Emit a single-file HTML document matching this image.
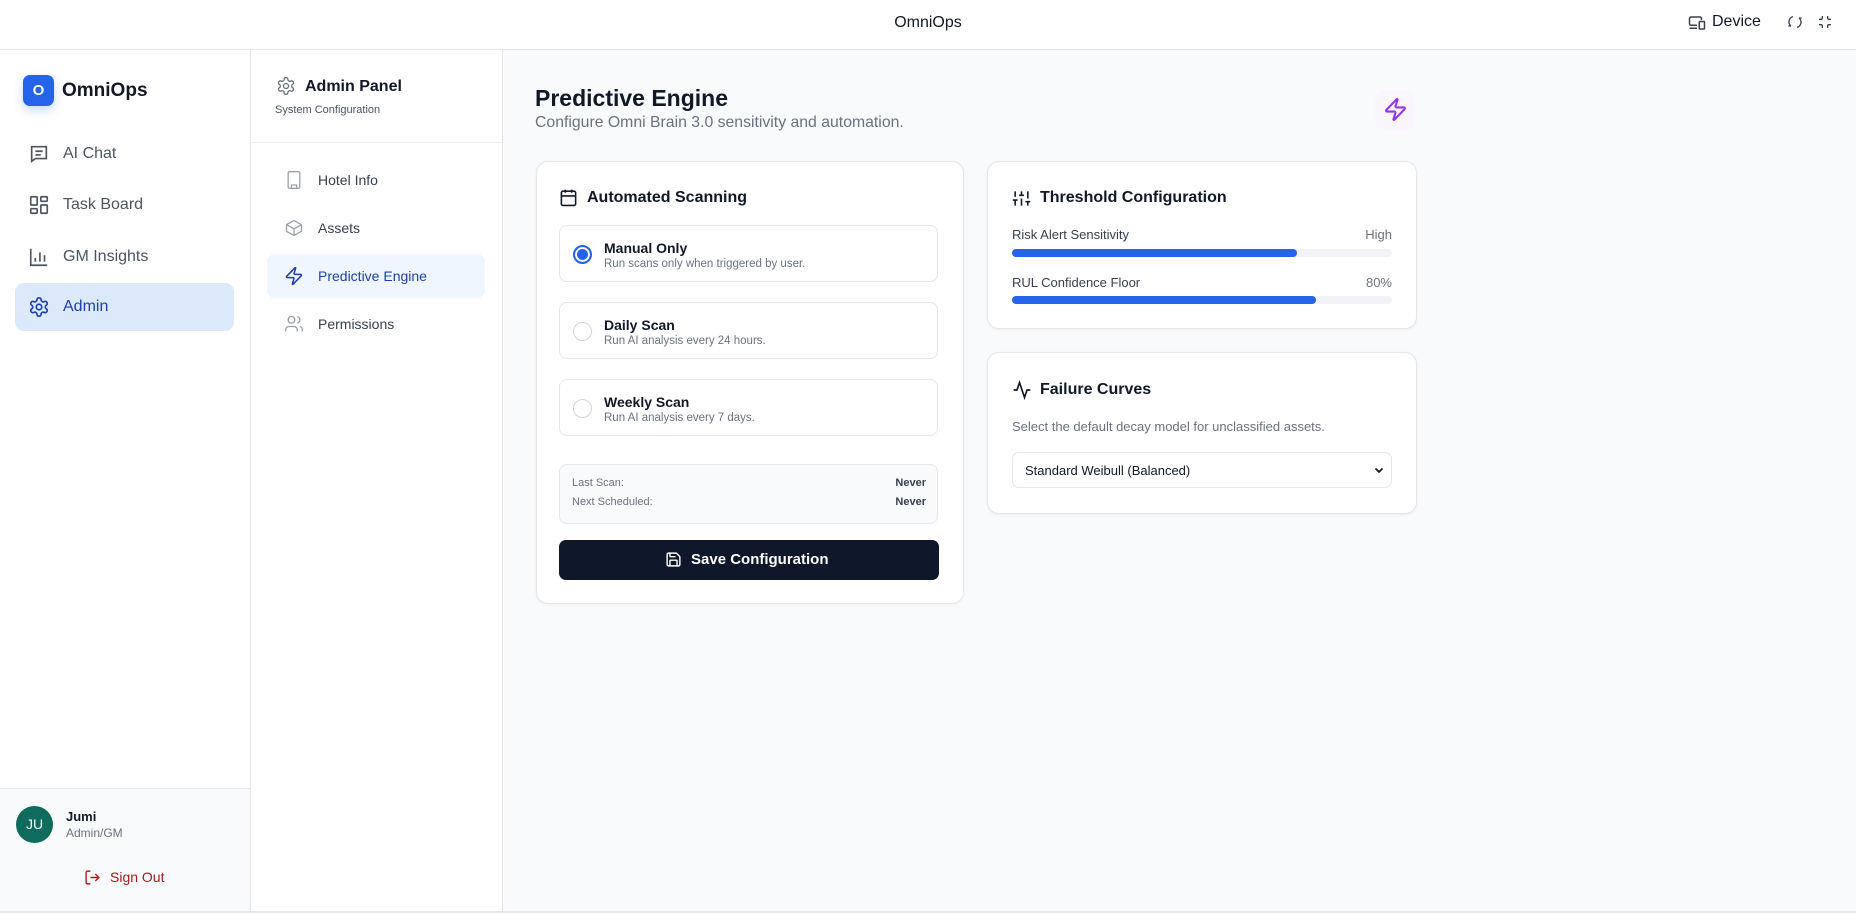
<!DOCTYPE html>
<html><head><meta charset="utf-8"><style>
*{box-sizing:border-box;margin:0;padding:0}
body{width:1856px;height:913px;overflow:hidden;font-family:"Liberation Sans",sans-serif;background:#fff;position:relative;color:#111827}
.abs{position:absolute}
svg{display:block}
.top{left:0;top:0;width:1856px;height:50px;border-bottom:1px solid #e5e7eb;background:#fff}
.side{left:0;top:50px;width:251px;height:861px;border-right:1px solid #e5e7eb;background:#fff}
.sub{left:251px;top:50px;width:252px;height:861px;border-right:1px solid #e5e7eb;background:#fff}
.main{left:503px;top:50px;width:1353px;height:861px;background:#f8fafc}
.nav{position:absolute;left:15px;width:219px;height:48px;border-radius:9px;display:flex;align-items:center;padding-left:13px;font-size:16px;color:#4b5563}
.nav svg{margin-right:13px}
.si{position:absolute;left:267px;width:218px;height:44px;border-radius:8px;display:flex;align-items:center;padding-left:17px;font-size:14px;color:#374151}
.si svg{margin-right:14px}
.card{position:absolute;background:#fff;border:1px solid #e5e7eb;border-radius:12px;box-shadow:0 1px 3px rgba(0,0,0,.05)}
.opt{position:absolute;left:559px;width:379px;height:57px;border:1px solid #e5e7eb;border-radius:8px;background:#fff}
.opt .r{position:absolute;left:13px;top:19px;width:19px;height:19px;border-radius:50%;border:1px solid #d1d5db}
.opt b{position:absolute;left:44px;top:14px;font-size:14px;color:#111827}
.opt span{position:absolute;left:44px;top:32px;font-size:11.5px;color:#6b7280}
.h3{position:absolute;font-size:16px;font-weight:bold;color:#111827}
</style></head><body>
<div class="abs top"></div>
<div class="abs" style="left:0;width:1856px;top:14px;text-align:center;font-size:16px;color:#111827">OmniOps</div>
<svg class="abs" style="left:1688px;top:14px" width="18" height="18" viewBox="0 0 24 24" fill="none" stroke="#374151" stroke-width="2"><path d="M18 8V6a2 2 0 0 0-2-2H4a2 2 0 0 0-2 2v7a2 2 0 0 0 2 2h8M2 19h10"/><rect x="15" y="10" width="7" height="10" rx="1"/></svg>
<div class="abs" style="left:1712px;top:13px;font-size:16px;color:#111827">Device</div>
<svg class="abs" style="left:1787px;top:14px" width="16" height="16" viewBox="0 0 24 24" fill="none" stroke="#374151" stroke-width="2"><path d="M9 4a8 8 0 0 0-3 14M6 18H2M15 20a8 8 0 0 0 3-14M18 6h4"/></svg>
<svg class="abs" style="left:1817px;top:14px" width="16" height="16" viewBox="0 0 24 24" fill="none" stroke="#374151" stroke-width="2"><path d="M8 3v3a2 2 0 0 1-2 2H3M21 8h-3a2 2 0 0 1-2-2V3M3 16h3a2 2 0 0 1 2 2v3M16 21v-3a2 2 0 0 1 2-2h3"/></svg>

<div class="abs side"></div>
<div class="abs" style="left:23px;top:75px;width:31px;height:31px;background:#2563eb;border-radius:7px;color:#fff;font-weight:bold;font-size:15px;text-align:center;line-height:31px;box-shadow:0 4px 10px rgba(37,99,235,.25)">O</div>
<div class="abs" style="left:62px;top:80px;font-size:19px;font-weight:bold;color:#111827">OmniOps</div>
<div class="nav" style="top:130px"><svg width="22" height="22" viewBox="0 0 24 24" fill="none" stroke="#4b5563" stroke-width="1.8"><path d="M4 4h16v13H8l-4 3z"/><path d="M8 9h8M8 13h6"/></svg>AI Chat</div>
<div class="nav" style="top:181px"><svg width="22" height="22" viewBox="0 0 24 24" fill="none" stroke="#4b5563" stroke-width="1.8"><rect x="3" y="3" width="7" height="9" rx="1"/><rect x="14" y="3" width="7" height="5" rx="1"/><rect x="14" y="12" width="7" height="9" rx="1"/><rect x="3" y="16" width="7" height="5" rx="1"/></svg>Task Board</div>
<div class="nav" style="top:233px"><svg width="22" height="22" viewBox="0 0 24 24" fill="none" stroke="#4b5563" stroke-width="1.8"><path d="M3 3v18h18M8 17v-4M13 17V7M18 17v-7"/></svg>GM Insights</div>
<div class="nav" style="top:283px;background:#dbe9fb;color:#1e40af"><svg width="22" height="22" viewBox="0 0 24 24" fill="none" stroke="#1e40af" stroke-width="1.8"><path d="M12.22 2h-.44a2 2 0 0 0-2 2v.18a2 2 0 0 1-1 1.73l-.43.25a2 2 0 0 1-2 0l-.15-.08a2 2 0 0 0-2.73.73l-.22.38a2 2 0 0 0 .73 2.73l.15.1a2 2 0 0 1 1 1.72v.51a2 2 0 0 1-1 1.74l-.15.09a2 2 0 0 0-.73 2.730l.22.38a2 2 0 0 0 2.73.73l.15-.08a2 2 0 0 1 2 0l.43.25a2 2 0 0 1 1 1.73V20a2 2 0 0 0 2 2h.44a2 2 0 0 0 2-2v-.18a2 2 0 0 1 1-1.73l.43-.25a2 2 0 0 1 2 0l.15.08a2 2 0 0 0 2.73-.73l.22-.39a2 2 0 0 0-.73-2.73l-.15-.08a2 2 0 0 1-1-1.74v-.5a2 2 0 0 1 1-1.74l.15-.09a2 2 0 0 0 .73-2.73l-.22-.38a2 2 0 0 0-2.73-.73l-.15.08a2 2 0 0 1-2 0l-.43-.25a2 2 0 0 1-1-1.73V4a2 2 0 0 0-2-2z"/><circle cx="12" cy="12" r="3"/></svg>Admin</div>
<div class="abs" style="left:0;top:788px;width:250px;height:123px;background:#f9fafb;border-top:1px solid #e5e7eb"></div>
<div class="abs" style="left:16px;top:806px;width:37px;height:37px;border-radius:50%;background:#0f6b5c;color:#fff;font-size:14px;text-align:center;line-height:37px">JU</div>
<div class="abs" style="left:66px;top:809px;font-size:13px;font-weight:bold">Jumi</div>
<div class="abs" style="left:66px;top:826px;font-size:12px;color:#6b7280">Admin/GM</div>
<svg class="abs" style="left:84px;top:869px" width="17" height="17" viewBox="0 0 24 24" fill="none" stroke="#b91c1c" stroke-width="2"><path d="M9 21H5a2 2 0 0 1-2-2V5a2 2 0 0 1 2-2h4M16 17l5-5-5-5M21 12H9"/></svg>
<div class="abs" style="left:110px;top:869px;font-size:14px;color:#a31d1d">Sign Out</div>

<div class="abs sub"></div>
<svg class="abs" style="left:276px;top:76px" width="20" height="20" viewBox="0 0 24 24" fill="none" stroke="#6b7280" stroke-width="1.6"><path d="M12.22 2h-.44a2 2 0 0 0-2 2v.18a2 2 0 0 1-1 1.73l-.43.25a2 2 0 0 1-2 0l-.15-.08a2 2 0 0 0-2.73.73l-.22.38a2 2 0 0 0 .73 2.73l.15.1a2 2 0 0 1 1 1.72v.51a2 2 0 0 1-1 1.74l-.15.09a2 2 0 0 0-.73 2.73l.22.38a2 2 0 0 0 2.73.73l.15-.08a2 2 0 0 1 2 0l.43.25a2 2 0 0 1 1 1.73V20a2 2 0 0 0 2 2h.44a2 2 0 0 0 2-2v-.18a2 2 0 0 1 1-1.73l.43-.25a2 2 0 0 1 2 0l.15.08a2 2 0 0 0 2.73-.73l.22-.39a2 2 0 0 0-.73-2.73l-.15-.08a2 2 0 0 1-1-1.74v-.5a2 2 0 0 1 1-1.74l.15-.09a2 2 0 0 0 .73-2.73l-.22-.38a2 2 0 0 0-2.73-.73l-.15.08a2 2 0 0 1-2 0l-.43-.25a2 2 0 0 1-1-1.73V4a2 2 0 0 0-2-2z"/><circle cx="12" cy="12" r="3"/></svg>
<div class="abs" style="left:305px;top:78px;font-size:16px;font-weight:bold">Admin Panel</div>
<div class="abs" style="left:275px;top:104px;font-size:11px;color:#4b5563">System Configuration</div>
<div class="abs" style="left:251px;top:142px;width:251px;height:1px;background:#eef0f3"></div>
<div class="si" style="top:158px"><svg width="20" height="20" viewBox="0 0 24 24" fill="none" stroke="#9ca3af" stroke-width="1.6"><rect x="5" y="2" width="14" height="20" rx="2"/><path d="M9 22v-4h6v4M9 6h.01M12 6h.01M15 6h.01M9 10h.01M12 10h.01M15 10h.01M9 14h.01M12 14h.01M15 14h.01"/></svg>Hotel Info</div>
<div class="si" style="top:206px"><svg width="20" height="20" viewBox="0 0 24 24" fill="none" stroke="#9ca3af" stroke-width="1.6"><path d="M21 8 12 3 3 8v8l9 5 9-5z"/><path d="M3 8l9 5 9-5M12 13v8"/></svg>Assets</div>
<div class="si" style="top:254px;background:#eff6ff;color:#1e40af"><svg width="20" height="20" viewBox="0 0 24 24" fill="none" stroke="#1e40af" stroke-width="1.8"><path d="M4 14a1 1 0 0 1-.78-1.63l9.9-10.2a.5.5 0 0 1 .86.46l-1.92 6.02A1 1 0 0 0 13 10h7a1 1 0 0 1 .78 1.63l-9.9 10.2a.5.5 0 0 1-.86-.46l1.92-6.02A1 1 0 0 0 11 14z"/></svg>Predictive Engine</div>
<div class="si" style="top:302px"><svg width="20" height="20" viewBox="0 0 24 24" fill="none" stroke="#9ca3af" stroke-width="1.6"><circle cx="9" cy="7" r="4"/><path d="M16 21v-2a4 4 0 0 0-4-4H6a4 4 0 0 0-4 4v2M16 3.130a4 4 0 0 1 0 7.75M22 21v-2a4 4 0 0 0-3-3.87"/></svg>Permissions</div>

<div class="abs main"></div>
<div class="abs" style="left:535px;top:85px;font-size:23px;font-weight:bold;color:#111827">Predictive Engine</div>
<div class="abs" style="left:535px;top:114px;font-size:15.8px;color:#6b7280">Configure Omni Brain 3.0 sensitivity and automation.</div>
<div class="abs" style="left:1375px;top:90px;width:40px;height:40px;border-radius:10px;background:#fbf5fd"></div>
<svg class="abs" style="left:1383px;top:97px" width="25" height="25" viewBox="0 0 24 24" fill="none" stroke="#9333ea" stroke-width="2"><path d="M4 14a1 1 0 0 1-.78-1.63l9.9-10.2a.5.5 0 0 1 .86.46l-1.92 6.02A1 1 0 0 0 13 10h7a1 1 0 0 1 .78 1.63l-9.9 10.2a.5.5 0 0 1-.86-.46l1.92-6.02A1 1 0 0 0 11 14z"/></svg>

<div class="card" style="left:536px;top:161px;width:428px;height:443px"></div>
<svg class="abs" style="left:559px;top:188px" width="19" height="19" viewBox="0 0 24 24" fill="none" stroke="#111827" stroke-width="2"><rect x="3" y="4" width="18" height="18" rx="2"/><path d="M16 2v4M8 2v4M3 10h18"/></svg>
<div class="h3" style="left:587px;top:189px">Automated Scanning</div>
<div class="opt" style="top:225px"><div class="r" style="border:2px solid #2563eb;box-shadow:inset 0 0 0 2px #fff;background:#2563eb"></div><b>Manual Only</b><span>Run scans only when triggered by user.</span></div>
<div class="opt" style="top:302px"><div class="r"></div><b>Daily Scan</b><span>Run AI analysis every 24 hours.</span></div>
<div class="opt" style="top:379px"><div class="r"></div><b>Weekly Scan</b><span>Run AI analysis every 7 days.</span></div>
<div class="abs" style="left:559px;top:464px;width:379px;height:60px;background:#f8fafc;border:1px solid #e5e7eb;border-radius:8px"></div>
<div class="abs" style="left:572px;top:477px;font-size:11px;color:#6b7280">Last Scan:</div>
<div class="abs" style="left:572px;top:496px;font-size:11px;color:#6b7280">Next Scheduled:</div>
<div class="abs" style="left:880px;width:46px;text-align:right;top:477px;font-size:11px;font-weight:bold;color:#374151">Never</div>
<div class="abs" style="left:880px;width:46px;text-align:right;top:496px;font-size:11px;font-weight:bold;color:#374151">Never</div>
<div class="abs" style="left:559px;top:540px;width:380px;height:40px;background:#0f172a;border-radius:7px"></div>
<svg class="abs" style="left:665px;top:551px" width="17" height="17" viewBox="0 0 24 24" fill="none" stroke="#fff" stroke-width="2"><path d="M15.2 3a2 2 0 0 1 1.4.6l3.8 3.8a2 2 0 0 1 .6 1.4V19a2 2 0 0 1-2 2H5a2 2 0 0 1-2-2V5a2 2 0 0 1 2-2z"/><path d="M17 21v-7a1 1 0 0 0-1-1H8a1 1 0 0 0-1 1v7M7 3v4a1 1 0 0 0 1 1h7"/></svg>
<div class="abs" style="left:691px;top:551px;font-size:15px;font-weight:bold;color:#fff">Save Configuration</div>

<div class="card" style="left:987px;top:161px;width:430px;height:168px"></div>
<svg class="abs" style="left:1012px;top:189px" width="19" height="19" viewBox="0 0 24 24" fill="none" stroke="#111827" stroke-width="2"><path d="M4 21v-7M4 10V3M12 21v-9M12 8V3M20 21v-5M20 12V3M1 14h6M9 8h6M17 16h6"/></svg>
<div class="h3" style="left:1040px;top:189px">Threshold Configuration</div>
<div class="abs" style="left:1012px;top:227px;font-size:13px;color:#374151">Risk Alert Sensitivity</div>
<div class="abs" style="left:1340px;width:52px;text-align:right;top:227px;font-size:13px;color:#6b7280">High</div>
<div class="abs" style="left:1012px;top:249px;width:380px;height:8px;border-radius:4px;background:#f1f3f6"><div style="width:285px;height:8px;border-radius:4px;background:#2563eb"></div></div>
<div class="abs" style="left:1012px;top:275px;font-size:13px;color:#374151">RUL Confidence Floor</div>
<div class="abs" style="left:1340px;width:52px;text-align:right;top:275px;font-size:13px;color:#6b7280">80%</div>
<div class="abs" style="left:1012px;top:296px;width:380px;height:8px;border-radius:4px;background:#f1f3f6"><div style="width:304px;height:8px;border-radius:4px;background:#2563eb"></div></div>

<div class="card" style="left:987px;top:352px;width:430px;height:162px"></div>
<svg class="abs" style="left:1012px;top:380px" width="20" height="20" viewBox="0 0 24 24" fill="none" stroke="#111827" stroke-width="2"><path d="M22 12h-4l-3 9L9 3l-3 9H2"/></svg>
<div class="h3" style="left:1040px;top:381px">Failure Curves</div>
<div class="abs" style="left:1012px;top:419px;font-size:13px;color:#6b7280">Select the default decay model for unclassified assets.</div>
<div class="abs" style="left:1012px;top:452px;width:380px;height:36px;border:1px solid #e5e7eb;border-radius:7px;background:#fff"></div>
<div class="abs" style="left:1025px;top:463px;font-size:13px;color:#111827">Standard Weibull (Balanced)</div>
<svg class="abs" style="left:1373px;top:464px" width="12" height="12" viewBox="0 0 24 24" fill="none" stroke="#111827" stroke-width="3.5"><path d="M5 9l7 7 7-7"/></svg>
<div class="abs" style="left:0;top:911px;width:1856px;height:2px;background:#e5e7eb"></div>
</body></html>
